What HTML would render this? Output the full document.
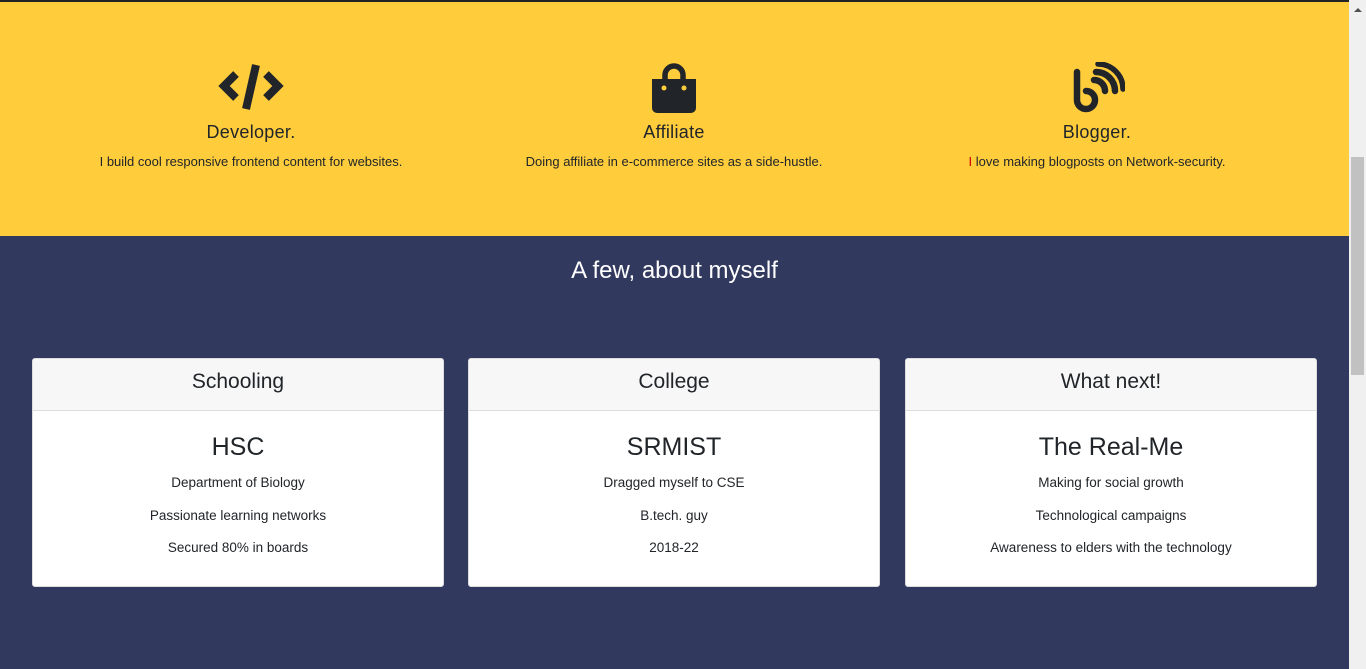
<!DOCTYPE html>
<html><head><style>
*{margin:0;padding:0;box-sizing:border-box}
body{width:1366px;height:669px;overflow:hidden;font-family:"Liberation Sans",sans-serif;color:#212529;background:#31395f;position:relative}
.top{position:absolute;left:0;top:0;width:1349px;height:2px;background:#222}
.yel{position:absolute;left:0;top:2px;width:1349px;height:234px;background:#ffcc3b}
.feat{position:absolute;top:0;width:440px;text-align:center}
.feat svg{position:absolute;left:50%;transform:translateX(-50%)}
.feat h3{position:absolute;top:120px;width:100%;font-weight:normal;font-size:18px;letter-spacing:.3px}
.feat p{position:absolute;top:152px;width:100%;font-size:13px}
.navy{position:absolute;left:0;top:236px;width:1349px;height:433px}
.navy h2{position:absolute;top:21px;width:100%;text-align:center;color:#fff;font-weight:normal;font-size:24px}
.card{position:absolute;top:358px;width:412px;height:229px;background:#fff;border:1px solid #ddd;border-radius:3px;text-align:center;overflow:hidden}
.card .hd{height:52px;background:#f7f7f7;border-bottom:1px solid #ddd;font-size:21px;line-height:46px}
.card h4{font-weight:normal;font-size:25px;margin-top:21px;line-height:30px}
.card p{font-size:13.5px;position:absolute;width:100%}
.sb{position:absolute;left:1349px;top:0;width:17px;height:669px;background:#f0f0f0}
.th{position:absolute;left:1351px;top:157px;width:13px;height:218px;background:#c1c1c1}
</style></head><body>
<div class="top"></div>
<div class="yel">
 <div class="feat" style="left:31px">
  <svg style="top:60px" width="66" height="50" viewBox="0 0 66 50"><g fill="none" stroke="#212529" stroke-width="8" stroke-linejoin="miter"><polyline points="18,12 6,24 18,36"/><polyline points="48,12 60,24 48,36"/><line x1="38" y1="3" x2="28" y2="47"/></g></svg>
  <h3>Developer.</h3><p>I build cool responsive frontend content for websites.</p></div>
 <div class="feat" style="left:454px">
  <svg style="top:60px" width="46" height="52" viewBox="0 0 46 52"><path d="M14 20V13a9 9 0 0 1 18 0v7" fill="none" stroke="#212529" stroke-width="5.5"/><path d="M1 17h44v29a5 5 0 0 1-5 5H6a5 5 0 0 1-5-5z" fill="#212529"/><circle cx="13" cy="26" r="2.5" fill="#ffcc3b"/><circle cx="33" cy="26" r="2.5" fill="#ffcc3b"/></svg>
  <h3>Affiliate</h3><p>Doing affiliate in e-commerce sites as a side-hustle.</p></div>
 <div class="feat" style="left:877px">
  <svg style="top:60px" width="56" height="52" viewBox="0 0 56 52"><g fill="none" stroke="#212529" stroke-width="6.5" stroke-linecap="round"><path d="M8 10v28a9 9 0 1 0 9-9"/><path d="M27 10a19 19 0 0 1 19 19"/><path d="M29 2a25 25 0 0 1 25 25" stroke-width="5.5"/><path d="M25 18a11 11 0 0 1 11 11"/></g></svg>
  <h3>Blogger.</h3><p><span style="color:#c00">I</span> love making blogposts on Network-security.</p></div>
</div>
<div class="navy"><h2>A few, about myself</h2></div>
<div class="card" style="left:32px"><div class="hd">Schooling</div><h4>HSC</h4><p style="top:116px">Department of Biology</p><p style="top:149px">Passionate learning networks</p><p style="top:181px">Secured 80% in boards</p></div>
<div class="card" style="left:468px"><div class="hd">College</div><h4>SRMIST</h4><p style="top:116px">Dragged myself to CSE</p><p style="top:149px">B.tech. guy</p><p style="top:181px">2018-22</p></div>
<div class="card" style="left:905px"><div class="hd">What next!</div><h4>The Real-Me</h4><p style="top:116px">Making for social growth</p><p style="top:149px">Technological campaigns</p><p style="top:181px">Awareness to elders with the technology</p></div>
<div class="sb"></div><div class="th"></div>
<div style="position:absolute;left:1354px;top:8px;width:0;height:0;border-left:4px solid transparent;border-right:4px solid transparent;border-bottom:4px solid #505050"></div>
</body></html>
